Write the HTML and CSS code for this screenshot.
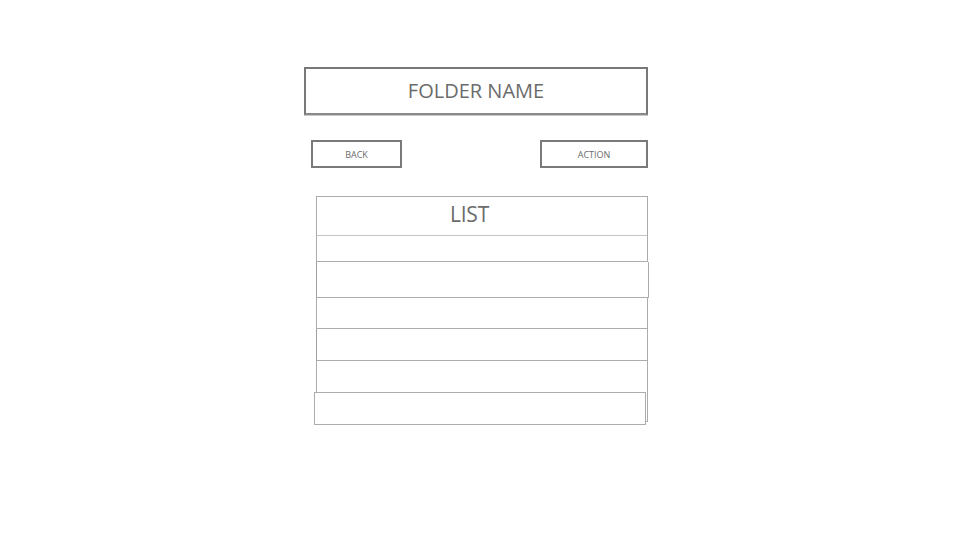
FILE: index.html
```html
<!DOCTYPE html>
<html lang="en">
<head>
    <meta charset="UTF-8">
    <meta name="viewport" content="width=device-width, initial-scale=1.0">
    <title>Folder</title>
    <link rel="stylesheet" href="styles.css">
</head>
<body>
    <div class="screen">
        <!-- folder title -->
        <div class="folder-title">FOLDER NAME</div>

        <!-- back / action buttons -->
        <div class="toolbar">
            <button class="btn btn-back">BACK</button>
            <button class="btn btn-action">ACTION</button>
        </div>

        <!-- list -->
        <div class="list">
            <div class="list-row list-head">LIST</div>
            <div class="list-row row-a"></div>
            <div class="list-row row-b"></div>
            <div class="list-row row-c"></div>
            <div class="list-row row-d"></div>
            <div class="list-row row-e"></div>
            <div class="list-row row-last"></div>
        </div>
    </div>
</body>
</html>
```

FILE: styles.css
```css
* {
    margin: 0;
    padding: 0;
    box-sizing: border-box;
}

body {
    font-family: 'Open Sans', 'Noto Sans', sans-serif;
    background-color: #fff;
    color: #6b6b6b;
    width: 960px;
    height: 540px;
    overflow: hidden;
}

.screen {
    width: 344px;
    margin-left: 304px;
    padding-top: 67px;
}

/* 标题框 */
.folder-title {
    height: 48px;
    border: 2px solid #787878;
    border-bottom-color: #8a8a8a;
    box-shadow: 0 1px 0 #c8c8c8;
    display: flex;
    justify-content: center;
    align-items: center;
    font-size: 20px;
    padding-bottom: 2px;
}

/* 按钮行 */
.toolbar {
    display: flex;
    justify-content: space-between;
    margin-top: 25px;
    padding-left: 7px;
}

.btn {
    height: 28px;
    border: 2px solid #7a7a7a;
    background: #fff;
    font-family: 'Open Sans', 'Noto Sans', sans-serif;
    font-size: 9px;
    color: #6b6b6b;
}

.btn-back {
    width: 91px;
}

.btn-action {
    width: 108px;
}

/* 列表 */
.list {
    margin-top: 28px;
    margin-left: 12px;
    width: 332px;
    height: 226px;
    border: 1px solid #acacac;
}

.list-row {
    border-bottom: 1px solid #acacac;
    background: #fff;
}

.list-head {
    height: 39px;
    border-bottom-color: #c4c4c4;
    font-size: 21px;
    line-height: 34px;
    text-align: center;
    padding-right: 25px;
    letter-spacing: -0.2px;
}

.row-a {
    height: 26px;
}

.row-b {
    height: 36px;
    margin-left: -1px;
    margin-right: -2px;
    border-left: 1px solid #a0a0a0;
    border-right: 1px solid #acacac;
}

.row-c {
    height: 31px;
}

.row-d {
    height: 32px;
    border-left: 1px solid #a0a0a0;
    margin-left: -1px;
}

.row-e {
    height: 31px;
    border-bottom: none;
}

.row-last {
    height: 33px;
    width: 332px;
    margin-left: -3px;
    border: 1px solid #acacac;
}
```
